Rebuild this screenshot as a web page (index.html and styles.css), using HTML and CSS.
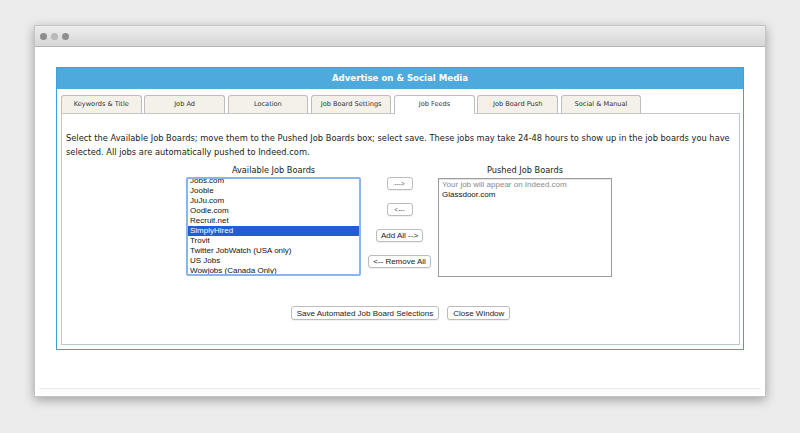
FILE: index.html
```html
<!DOCTYPE html>
<html>
<head>
<meta charset="utf-8">
<link rel="stylesheet" href="styles.css">
</head>
<body>
<div class="window">
  <div class="titlebar">
    <span class="dot dark"></span><span class="dot light"></span><span class="dot dark"></span>
  </div>
  <div class="content">
    <div class="panel">
      <div class="panel-head">Advertise on &amp; Social Media</div>
      <div class="panel-body">
        <ul class="tabs">
          <li class="tab">Keywords &amp; Title</li>
          <li class="tab">Job Ad</li>
          <li class="tab">Location</li>
          <li class="tab">Job Board Settings</li>
          <li class="tab active">Job Feeds</li>
          <li class="tab">Job Board Push</li>
          <li class="tab">Social &amp; Manual</li>
        </ul>
        <div class="tab-box">
          <p class="intro">Select the Available Job Boards; move them to the Pushed Job Boards box; select save. These jobs may take 24-48 hours to show up in the job boards you have<br>selected. All jobs are automatically pushed to Indeed.com.</p>
          <div class="picker">
            <div class="col">
              <div class="col-title">Available Job Boards</div>
              <div class="listbox focused">
                <div class="list-inner scrolled">
                  <div class="item">Jobs.com</div>
                  <div class="item">Jooble</div>
                  <div class="item">JuJu.com</div>
                  <div class="item">Oodle.com</div>
                  <div class="item">Recruit.net</div>
                  <div class="item selected">SimplyHired</div>
                  <div class="item">Trovit</div>
                  <div class="item">Twitter JobWatch (USA only)</div>
                  <div class="item">US Jobs</div>
                  <div class="item">Wowjobs (Canada Only)</div>
                </div>
              </div>
            </div>
            <div class="moves">
              <button class="btn small">---&gt;</button>
              <button class="btn small">&lt;---</button>
              <button class="btn">Add All --&gt;</button>
              <button class="btn">&lt;-- Remove All</button>
            </div>
            <div class="col">
              <div class="col-title">Pushed Job Boards</div>
              <div class="listbox plain">
                <div class="list-inner">
                  <div class="item muted">Your job will appear on Indeed.com</div>
                  <div class="item">Glassdoor.com</div>
                </div>
              </div>
            </div>
          </div>
          <div class="actions">
            <button class="btn">Save Automated Job Board Selections</button>
            <button class="btn">Close Window</button>
          </div>
        </div>
      </div>
    </div>
  </div>
  <div class="window-foot"></div>
</div>
</body>
</html>
```

FILE: styles.css
```css
* { box-sizing: border-box; }
html, body { margin: 0; padding: 0; }
body {
  width: 800px;
  height: 433px;
  background: #ececec;
  overflow: hidden;
  font-family: "DejaVu Sans", Verdana, sans-serif;
  color: #222;
}
.window {
  margin: 25px 0 0 34px;
  width: 732px;
  height: 372px;
  background: #fff;
  border: 1px solid #c4c4c4;
  box-shadow: 0 3px 10px rgba(0,0,0,0.32);
  display: flex;
  flex-direction: column;
}
.titlebar {
  height: 21px;
  flex: none;
  background: linear-gradient(#ededed, #d6d6d6);
  border-bottom: 1px solid #b4b4b4;
  display: flex;
  align-items: center;
  padding-left: 5px;
  gap: 4px;
}
.dot {
  width: 7px;
  height: 7px;
  border-radius: 50%;
  display: block;
}
.dot.dark { background: #8e8e8e; }
.dot.light { background: #b9b9b9; }
.content {
  flex: 1;
  padding: 20px 0 0 21px;
}
.panel {
  width: 688px;
  border: 1px solid #3aa3de;
}
.panel-head {
  height: 21px;
  background: #4eaadc;
  color: #fff;
  font-weight: bold;
  font-size: 8.6px;
  line-height: 21px;
  text-align: center;
}
.panel-body {
  padding: 6px 3px 4px 4px;
}
.tabs {
  list-style: none;
  margin: 0;
  padding: 0;
  display: flex;
  gap: 2.7px;
  height: 18px;
  position: relative;
  z-index: 1;
}
.tab {
  width: 80.6px;
  height: 18px;
  background: #f4f1ea;
  border: 1px solid #bdbdbd;
  border-bottom: none;
  border-radius: 3px 3px 0 0;
  font-size: 6.6px;
  line-height: 17px;
  text-align: center;
  color: #333;
}
.tab.active {
  background: #fff;
  height: 19px;
}
.tab-box {
  width: 679px;
  height: 232px;
  border: 1px solid #c6c6c6;
  padding: 17px 4px 0 4px;
}
.intro {
  margin: 0;
  font-size: 8.3px;
  line-height: 14px;
  color: #222;
  white-space: nowrap;
}
.picker {
  display: flex;
  justify-content: center;
  gap: 7px;
  margin: 6px 3px 0 0;
}
.col { width: 175px; }
.col + .moves + .col { width: 174px; }
.col-title {
  font-size: 8.2px;
  line-height: 11px;
  text-align: center;
  color: #222;
}
.listbox {
  height: 99px;
  overflow: hidden;
  background: #fff;
  font-family: "Liberation Sans", Arial, sans-serif;
  font-size: 8px;
  line-height: 10px;
}
.listbox.focused {
  margin-top: 1px;
  border: 2px solid #86b5f0;
  border-radius: 2px;
}
.listbox.plain {
  margin-top: 2px;
  border: 1px solid #9d9d9d;
  box-shadow: inset 0 1px 1px rgba(0,0,0,0.12);
}
.list-inner.scrolled { margin-top: -3px; }
.listbox.plain .list-inner { padding-top: 1px; }
.item {
  padding-left: 2px;
  white-space: nowrap;
  color: #111;
}
.listbox.plain .item { padding-left: 3px; }
.item.selected {
  background: #1f5fd2;
  color: #fff;
}
.item.muted { color: #8a8a8a; }
.moves {
  width: 63px;
  padding-top: 12px;
  display: flex;
  flex-direction: column;
  align-items: center;
  gap: 13px;
}
.btn {
  height: 13px;
  padding: 0 5px;
  margin: 0;
  background: #fff;
  border: 1px solid #bcbcbc;
  border-radius: 3px;
  font-family: "Liberation Sans", Arial, sans-serif;
  font-size: 8px;
  line-height: 11px;
  color: #222;
  white-space: nowrap;
  box-shadow: 0 1px 0 rgba(0,0,0,0.06);
}
.moves .btn { padding: 0 4px; }
.moves .btn.small { width: 26px; padding: 0; font-size: 6.5px; color: #555; }
.actions {
  display: flex;
  justify-content: center;
  gap: 8px;
  margin-top: 29px;
}
.actions .btn { height: 14px; padding: 0 5px; }
.window-foot {
  flex: none;
  height: 8px;
  margin: 0 4px;
  border-top: 1px solid #ececec;
  background: linear-gradient(#fbfbfb, #fff);
}
```
